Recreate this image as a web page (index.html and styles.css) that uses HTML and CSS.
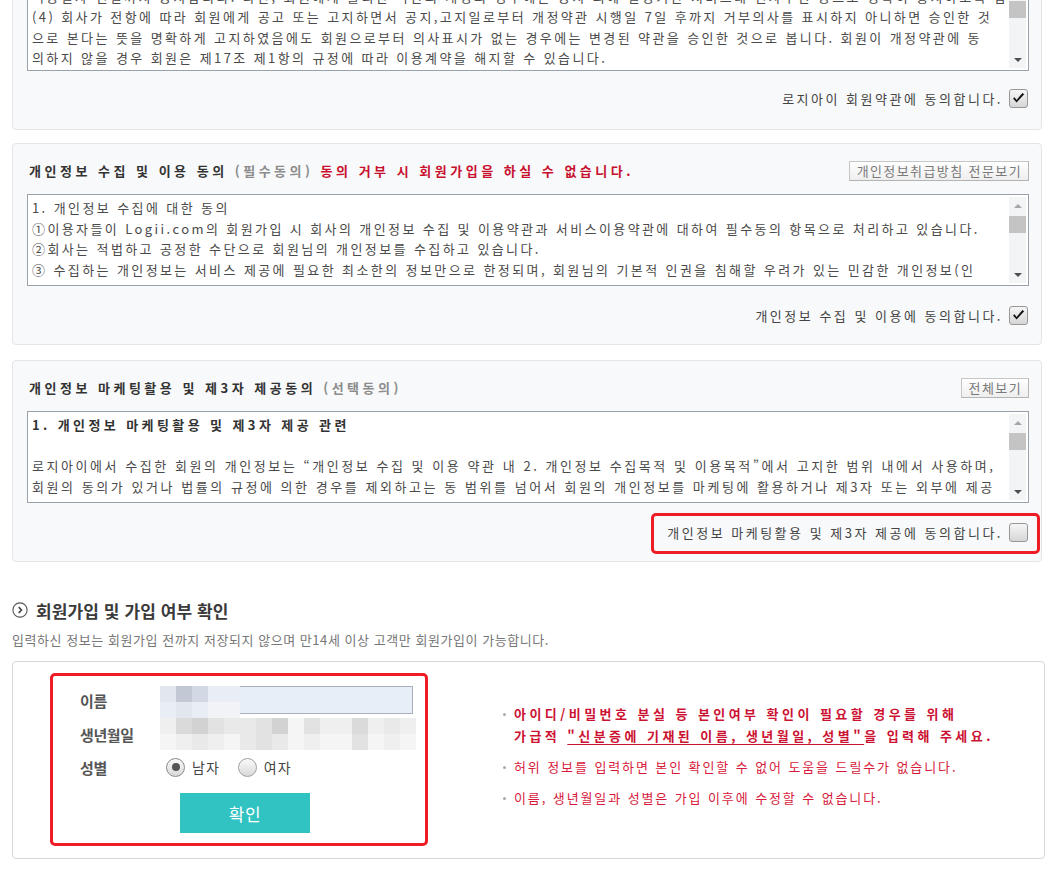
FILE: index.html
```html
<!DOCTYPE html>
<html lang="ko">
<head>
<meta charset="utf-8">
<title>회원가입</title>
<link rel="stylesheet" href="styles.css">
</head>
<body>
<div class="page">

  <section class="panel first">
    <div class="terms">
      <div class="terms-text">
        <div class="lines scrolled">
          <p>적용일자 전일까지 공지합니다. 다만, 회원에게 불리한 약관의 개정의 경우에는 공지 외에 일정기간 서비스내 전자우편 등으로 명확히 통지하도록 합니다.</p>
          <p>(4) 회사가 전항에 따라 회원에게 공고 또는 고지하면서 공지,고지일로부터 개정약관 시행일 7일 후까지 거부의사를 표시하지 아니하면 승인한 것</p>
          <p>으로 본다는 뜻을 명확하게 고지하였음에도 회원으로부터 의사표시가 없는 경우에는 변경된 약관을 승인한 것으로 봅니다. 회원이 개정약관에 동</p>
          <p>의하지 않을 경우 회원은 제17조 제1항의 규정에 따라 이용계약을 해지할 수 있습니다.</p>
        </div>
      </div>
      <div class="scrollbar">
        <span class="sb-btn up"></span>
        <span class="sb-track"><span class="sb-thumb"></span></span>
        <span class="sb-btn down"></span>
      </div>
    </div>
    <div class="agree">
      <label class="agree-label">로지아이 회원약관에 동의합니다.
        <span class="check on"><svg viewBox="0 0 19 19" width="19" height="19"><path d="M4 9.6 L7.6 13.6 L15.2 5.2 L13.4 4 L7.5 10.9 L5.6 8.3 Z" fill="#141414"/></svg></span>
      </label>
    </div>
  </section>

  <section class="panel">
    <div class="panel-head">
      <h3 class="panel-title">개인정보 수집 및 이용 동의 <span class="muted">(필수동의)</span> <span class="warn">동의 거부 시 회원가입을 하실 수 없습니다.</span></h3>
      <button class="btn-view" type="button">개인정보취급방침 전문보기</button>
    </div>
    <div class="terms">
      <div class="terms-text">
        <div class="lines">
          <p>1. 개인정보 수집에 대한 동의</p>
          <p>①이용자들이 Logii.com의 회원가입 시 회사의 개인정보 수집 및 이용약관과 서비스이용약관에 대하여 필수동의 항목으로 처리하고 있습니다.</p>
          <p>②회사는 적법하고 공정한 수단으로 회원님의 개인정보를 수집하고 있습니다.</p>
          <p>③ 수집하는 개인정보는 서비스 제공에 필요한 최소한의 정보만으로 한정되며, 회원님의 기본적 인권을 침해할 우려가 있는 민감한 개인정보(인</p>
        </div>
      </div>
      <div class="scrollbar">
        <span class="sb-btn up"></span>
        <span class="sb-track"><span class="sb-thumb"></span></span>
        <span class="sb-btn down"></span>
      </div>
    </div>
    <div class="agree">
      <label class="agree-label">개인정보 수집 및 이용에 동의합니다.
        <span class="check on"><svg viewBox="0 0 19 19" width="19" height="19"><path d="M4 9.6 L7.6 13.6 L15.2 5.2 L13.4 4 L7.5 10.9 L5.6 8.3 Z" fill="#141414"/></svg></span>
      </label>
    </div>
  </section>

  <section class="panel">
    <div class="panel-head">
      <h3 class="panel-title">개인정보 마케팅활용 및 제3자 제공동의 <span class="muted">(선택동의)</span></h3>
      <button class="btn-view" type="button">전체보기</button>
    </div>
    <div class="terms">
      <div class="terms-text">
        <div class="lines">
          <p class="strong">1. 개인정보 마케팅활용 및 제3자 제공 관련</p>
          <p>&nbsp;</p>
          <p class="wide">로지아이에서 수집한 회원의 개인정보는 “개인정보 수집 및 이용 약관 내 2. 개인정보 수집목적 및 이용목적”에서 고지한 범위 내에서 사용하며,</p>
          <p class="wide">회원의 동의가 있거나 법률의 규정에 의한 경우를 제외하고는 동 범위를 넘어서 회원의 개인정보를 마케팅에 활용하거나 제3자 또는 외부에 제공</p>
        </div>
      </div>
      <div class="scrollbar">
        <span class="sb-btn up"></span>
        <span class="sb-track"><span class="sb-thumb"></span></span>
        <span class="sb-btn down"></span>
      </div>
    </div>
    <div class="agree">
      <label class="agree-label marked">개인정보 마케팅활용 및 제3자 제공에 동의합니다.
        <span class="check"></span>
        <span class="mark"></span>
      </label>
    </div>
  </section>

  <h2 class="join-head">
    <svg class="join-icon" viewBox="0 0 16 16" width="16" height="16"><circle cx="8" cy="8" r="7.1" fill="none" stroke="#555" stroke-width="1.1"/><path d="M6.7 5.1 L9.5 8 L6.7 10.9" fill="none" stroke="#444" stroke-width="1.6"/></svg>
    회원가입 및 가입 여부 확인
  </h2>
  <p class="join-sub">입력하신 정보는 회원가입 전까지 저장되지 않으며 만14세 이상 고객만 회원가입이 가능합니다.</p>

  <div class="form-box">
    <div class="form-area">
      <div class="frow r1">
        <span class="flabel">이름</span>
        <div class="name-field">
          <input class="name-input" type="text" value="">
          <div class="mosaic name-mosaic">
            <i class="n1"></i><i class="n3"></i><i class="n2"></i><i class="n0"></i><i class="n0"></i>
            <i class="n0"></i><i class="n1"></i><i class="n0"></i><i class="n4"></i><i class="n4"></i>
          </div>
        </div>
      </div>
      <div class="frow r2">
        <span class="flabel">생년월일</span>
        <div class="mosaic birth-mosaic">
          <i class="g1"></i><i class="g4"></i><i class="g5"></i><i class="g3"></i><i class="g2"></i><i class="g2"></i><i class="g3"></i><i class="g5"></i><i class="g0"></i><i class="g3"></i><i class="g1"></i><i class="g1"></i><i class="g4"></i><i class="g1"></i><i class="g2"></i><i class="g1"></i>
          <i class="g0"></i><i class="g1"></i><i class="g2"></i><i class="g1"></i><i class="g0"></i><i class="g2"></i><i class="g3"></i><i class="g2"></i><i class="g0"></i><i class="g1"></i><i class="g0"></i><i class="g0"></i><i class="g3"></i><i class="g0"></i><i class="g1"></i><i class="g0"></i>
        </div>
      </div>
      <div class="frow r3">
        <span class="flabel">성별</span>
        <div class="radios">
          <label class="radio"><span class="rdot on"></span>남자</label>
          <label class="radio"><span class="rdot"></span>여자</label>
        </div>
      </div>
      <button class="btn-ok" type="button">확인</button>
    </div>

    <ul class="info">
      <li class="em">아이디/비밀번호 분실 등 본인여부 확인이 필요할 경우를 위해<br>가급적 <u>"신분증에 기재된 이름, 생년월일, 성별"</u>을 입력해 주세요.</li>
      <li>허위 정보를 입력하면 본인 확인할 수 없어 도움을 드릴수가 없습니다.</li>
      <li>이름, 생년월일과 성별은 가입 이후에 수정할 수 없습니다.</li>
    </ul>
  </div>

</div>
</body>
</html>
```

FILE: styles.css
```css
* { box-sizing: border-box; }

html, body {
  margin: 0;
  padding: 0;
  background: #fff;
}

body {
  font-family: "Noto Sans CJK KR", "Noto Sans", sans-serif;
  font-size: 13px;
  color: #444;
}

.page {
  width: 1062px;
  padding-left: 12px;
  overflow: hidden;
}

/* ---------- agreement panels ---------- */
.panel {
  width: 1030px;
  background: #f8f9fa;
  border: 1px solid #e3e5e8;
  border-radius: 4px;
  padding: 17px 12px 19px 14px;
  margin-bottom: 15px;
}

.panel.first {
  margin-top: -39px;
  margin-bottom: 13px;
  padding-bottom: 21px;
}

.panel-head {
  display: flex;
  justify-content: space-between;
  align-items: center;
  height: 20px;
  margin-bottom: 13px;
  padding-left: 2px;
}

.panel-title {
  margin: 0;
  font-size: 13px;
  font-weight: 700;
  color: #333;
  letter-spacing: 3.5px;
  line-height: 20px;
  white-space: nowrap;
}

.muted { color: #8c8c8c; }
.warn { color: #c8102e; }

.btn-view {
  height: 20px;
  padding: 0 6px 0 7px;
  border: 1px solid #c6c6c6;
  border-right-color: #b4b4b4;
  border-bottom-color: #b4b4b4;
  background: linear-gradient(#ffffff, #eeeeee);
  color: #7a7a7a;
  font-family: "Noto Sans CJK KR", sans-serif;
  font-size: 13px;
  letter-spacing: 1.4px;
  line-height: 18px;
  white-space: nowrap;
}

.terms {
  display: flex;
  height: 92px;
  background: #fff;
  border: 1px solid #98a2ad;
}

.terms-text {
  flex: 1;
  overflow: hidden;
  padding: 3px 4px;
}

.lines p {
  margin: 0;
  line-height: 20.5px;
  white-space: nowrap;
  letter-spacing: 2.4px;
  color: #4a4a4a;
}

.lines p.wide { letter-spacing: 2.55px; }

.lines p.strong {
  font-weight: 700;
  color: #333;
  letter-spacing: 3.4px;
}

.lines.scrolled { margin-top: 3.75px; }

.scrollbar {
  width: 17px;
  margin: 2px 2px 2px 0;
  background: #f3f4f5;
  display: flex;
  flex-direction: column;
}

.sb-btn {
  height: 17px;
  display: flex;
  align-items: center;
  justify-content: center;
}

.sb-btn::before {
  content: "";
  width: 0;
  height: 0;
  border-left: 4px solid transparent;
  border-right: 4px solid transparent;
}

.sb-btn.up::before { border-bottom: 4px solid #a6a6a6; }
.sb-btn.down::before { border-top: 4px solid #4e4e4e; }

.sb-track { flex: 1; }

.sb-thumb {
  display: block;
  height: 17px;
  margin-top: 2px;
  background: #c4c4c4;
}

.agree {
  display: flex;
  justify-content: flex-end;
  margin-top: 20px;
  height: 19px;
}

.panel.first .agree { margin-top: 18px; }

.agree-label {
  position: relative;
  display: flex;
  align-items: center;
  gap: 6px;
  margin-right: 1px;
  font-size: 13px;
  letter-spacing: 2.5px;
  color: #444;
  white-space: nowrap;
}

.check {
  width: 19px;
  height: 19px;
  border: 1px solid #979797;
  border-radius: 3px;
  background: linear-gradient(#f6f6f6, #d6d6d6);
  display: flex;
  align-items: center;
  justify-content: center;
}

.check svg { display: block; margin: -1px; }

.mark {
  position: absolute;
  left: -16px;
  right: -12px;
  top: -10px;
  bottom: -12px;
  border: 3px solid #ee1c25;
  border-radius: 5px;
}

/* ---------- join section ---------- */
.join-head {
  display: flex;
  align-items: center;
  gap: 8px;
  height: 22px;
  margin: 37px 0 0;
  font-size: 17px;
  font-weight: 700;
  color: #3a3a3a;
  letter-spacing: 0.1px;
}

.join-icon { display: block; flex: none; }

.join-sub {
  margin: 10px 0 0;
  line-height: 18px;
  font-size: 13px;
  color: #777;
  letter-spacing: 0.55px;
}

.form-box {
  display: flex;
  align-items: flex-start;
  width: 1033px;
  margin-top: 12px;
  border: 1px solid #d6d6d6;
  border-radius: 4px;
  padding: 11px 0 12px 37px;
}

.form-area {
  width: 378px;
  border: 3px solid #ee1c25;
  border-radius: 5px;
  padding: 10px 0 10px 27px;
}

.frow {
  display: grid;
  grid-template-columns: 80px 1fr;
  align-items: center;
}

.r1 { height: 28px; }
.r2 { height: 32px; margin-top: 4px; }
.r3 { height: 26px; margin-top: 4px; }

.flabel {
  font-size: 15px;
  font-weight: 700;
  color: #555;
  letter-spacing: -0.4px;
}

.name-field {
  position: relative;
  width: 253px;
  height: 28px;
}

.name-input {
  display: block;
  width: 253px;
  height: 28px;
  margin: 0;
  border: 1px solid #aab0b8;
  background: #e8eef8;
}

.mosaic { display: grid; }
.mosaic i { display: block; }

.name-mosaic {
  position: absolute;
  left: 0;
  top: 0;
  grid-template-columns: repeat(5, 16px);
  grid-auto-rows: 16px;
}

.birth-mosaic {
  grid-template-columns: repeat(16, 16px);
  grid-auto-rows: 16px;
}

.n0 { background: #e9edf5; }
.n1 { background: #e1e6ef; }
.n2 { background: #d2d8e4; }
.n3 { background: #c2c8d4; }
.n4 { background: #f1f3f7; }

.g0 { background: #f5f5f5; }
.g1 { background: #efefef; }
.g2 { background: #e9e9e9; }
.g3 { background: #e2e2e2; }
.g4 { background: #dadada; }
.g5 { background: #d2d2d2; }

.radios {
  display: flex;
  align-items: center;
  padding-left: 6px;
}

.radio {
  display: flex;
  align-items: center;
  gap: 7px;
  margin-right: 18px;
  font-size: 14px;
  color: #444;
  letter-spacing: 1px;
}

.rdot {
  width: 19px;
  height: 19px;
  border: 1px solid #a0a0a0;
  border-radius: 50%;
  background: linear-gradient(#fafafa, #d9d9d9);
  display: flex;
  align-items: center;
  justify-content: center;
}

.rdot.on { border-color: #8a8a8a; }

.rdot.on::after {
  content: "";
  width: 8px;
  height: 8px;
  border-radius: 50%;
  background: #555;
}

.btn-ok {
  display: block;
  width: 130px;
  height: 40px;
  margin: 13px 0 0 100px;
  border: 0;
  background: #31c3c1;
  color: #fff;
  font-family: "Noto Sans CJK KR", sans-serif;
  font-size: 17px;
  letter-spacing: 0.5px;
}

.info {
  list-style: none;
  margin: 30px 0 0 75px;
  padding: 0;
  color: #d71a3b;
}

.info li {
  position: relative;
  padding-left: 11px;
  line-height: 22px;
  font-size: 13px;
  letter-spacing: 1.9px;
  white-space: nowrap;
}

.info li + li { margin-top: 9px; }

.info li::before {
  content: "";
  position: absolute;
  left: 0;
  top: 10px;
  width: 3px;
  height: 3px;
  border-radius: 50%;
  background: #aaa;
}

.info li.em {
  font-weight: 700;
  color: #cc1232;
  letter-spacing: 3.45px;
}

.info u {
  text-underline-offset: 3px;
}
```
